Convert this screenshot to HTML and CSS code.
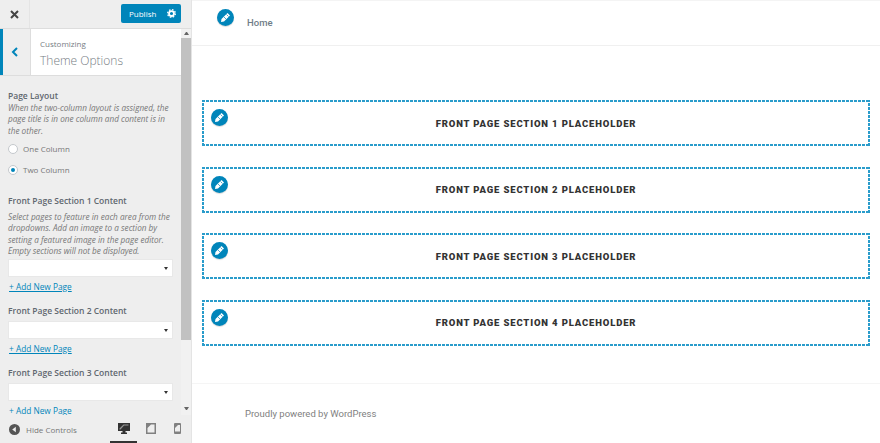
FILE: index.html
```html
<!DOCTYPE html>
<html lang="en">
<head>
  <meta charset="UTF-8">
  <title>Theme Options</title>
  <link rel="stylesheet" href="styles.css">
</head>
<body>
  <aside class="sidebar">
    <div class="topbar">
      <div class="close">
        <svg width="9" height="9" viewBox="0 0 9 9"><path d="M1 1l7 7M8 1L1 8" stroke="#444" stroke-width="2"/></svg>
      </div>
      <div class="publish">
        <span>Publish</span>
        <svg width="9" height="9" viewBox="0 0 20 20"><circle cx="10" cy="10" r="5.500" fill="none" stroke="#fff" stroke-width="4"/><circle cx="10" cy="10" r="8.500" fill="none" stroke="#fff" stroke-width="3" stroke-dasharray="3.500 3.170"/></svg>
      </div>
    </div>
    <div class="middle">
      <div class="scroller">
        <div class="section-head">
          <div class="back">
            <svg width="7" height="10" viewBox="0 0 7 10"><path d="M6 1L2 5l4 4" fill="none" stroke="#0085ba" stroke-width="2"/></svg>
          </div>
          <div class="head-text">
            <div class="crumb">Customizing</div>
            <div class="head-title">Theme Options</div>
          </div>
        </div>
        <div class="controls">
          <h4 class="label">Page Layout</h4>
          <p class="desc">When the two-column layout is assigned, the page title is in one column and content is in the other.</p>
          <div class="radio"><i class="dot"></i>One Column</div>
          <div class="radio"><i class="dot on"></i>Two Column</div>

          <h4 class="label first">Front Page Section 1 Content</h4>
          <p class="desc">Select pages to feature in each area from the dropdowns. Add an image to a section by setting a featured image in the page editor. Empty sections will not be displayed.</p>
          <div class="select"><b></b></div>
          <a class="add">+ Add New Page</a>

          <h4 class="label">Front Page Section 2 Content</h4>
          <div class="select"><b></b></div>
          <a class="add">+ Add New Page</a>

          <h4 class="label">Front Page Section 3 Content</h4>
          <div class="select"><b></b></div>
          <a class="add">+ Add New Page</a>
        </div>
      </div>
      <div class="scrollbar">
        <div class="arrow up"></div>
        <div class="thumb"></div>
        <div class="arrow down"></div>
      </div>
    </div>
    <div class="bottombar">
      <div class="hide">
        <svg width="11" height="11" viewBox="0 0 11 11"><circle cx="5.500" cy="5.500" r="5.500" fill="#555"/><path d="M6.800 2.800v5.400L3.200 5.500z" fill="#eee"/></svg>
        <span>Hide Controls</span>
      </div>
      <div class="devices">
        <div class="device active">
          <svg width="12" height="12" viewBox="0 0 12 12"><path fill="#333" d="M0 1h12v8H7.500v1.500H9V12H3v-1.500h1.500V9H0z"/><path fill="#999" d="M1.500 7.500v-1l4-4h5v1h-4.500l-3.500 4z"/></svg>
        </div>
        <div class="device">
          <svg width="10" height="11" viewBox="0 0 10 11"><path fill="#808080" d="M0 0h10v11H0z"/><path fill="#eee" d="M1.500 9.500V5L5 1.500h3.500v8z"/></svg>
        </div>
        <div class="device">
          <svg width="7" height="11" viewBox="0 0 7 11"><path fill="#808080" d="M0 1q0-1 1-1h5q1 0 1 1v9q0 1-1 1H1q-1 0-1-1z"/><path fill="#eee" d="M1 8.500V5l3-3h2v6.500z"/></svg>
        </div>
      </div>
    </div>
  </aside>

  <main class="preview">
    <header class="site-head">
      <span class="pencil"><svg width="11" height="11" viewBox="0 0 11 11"><path fill="#fff" d="M7.500 1l2.500 2.500-6 6L1 10l.5-3z"/><path stroke="#0085ba" stroke-width=".7" d="M6.500 2.500l2 2M4 5l2 2"/></svg></span>
      <span class="home">Home</span>
    </header>
    <div class="sections">
      <section class="block">
        <span class="pencil"><svg width="11" height="11" viewBox="0 0 11 11"><path fill="#fff" d="M7.500 1l2.500 2.500-6 6L1 10l.5-3z"/><path stroke="#0085ba" stroke-width=".7" d="M6.500 2.500l2 2M4 5l2 2"/></svg></span>
        <h2>Front Page Section 1 Placeholder</h2>
      </section>
      <section class="block">
        <span class="pencil"><svg width="11" height="11" viewBox="0 0 11 11"><path fill="#fff" d="M7.500 1l2.500 2.500-6 6L1 10l.5-3z"/><path stroke="#0085ba" stroke-width=".7" d="M6.500 2.500l2 2M4 5l2 2"/></svg></span>
        <h2>Front Page Section 2 Placeholder</h2>
      </section>
      <section class="block">
        <span class="pencil"><svg width="11" height="11" viewBox="0 0 11 11"><path fill="#fff" d="M7.500 1l2.500 2.500-6 6L1 10l.5-3z"/><path stroke="#0085ba" stroke-width=".7" d="M6.500 2.500l2 2M4 5l2 2"/></svg></span>
        <h2>Front Page Section 3 Placeholder</h2>
      </section>
      <section class="block">
        <span class="pencil"><svg width="11" height="11" viewBox="0 0 11 11"><path fill="#fff" d="M7.500 1l2.500 2.500-6 6L1 10l.5-3z"/><path stroke="#0085ba" stroke-width=".7" d="M6.500 2.500l2 2M4 5l2 2"/></svg></span>
        <h2>Front Page Section 4 Placeholder</h2>
      </section>
    </div>
    <footer class="site-foot">Proudly powered by WordPress</footer>
  </main>
</body>
</html>
```

FILE: styles.css
```css
* {
  box-sizing: border-box;
}
body {
  margin: 0;
  width: 880px;
  height: 443px;
  display: flex;
  overflow: hidden;
  background: #fff;
  font-family: "Open Sans", sans-serif;
}

/* customizer sidebar */
.sidebar {
  width: 192px;
  height: 443px;
  display: flex;
  flex-direction: column;
  background: #eee;
  border-right: 1px solid #e4e4e4;
}
.topbar {
  height: 29px;
  flex: none;
  display: flex;
  align-items: center;
  justify-content: space-between;
  padding-right: 10px;
  background: #eee;
  border-bottom: 1px solid #ddd;
}
.close {
  width: 30px;
  height: 28px;
  display: flex;
  align-items: center;
  justify-content: center;
  border-right: 1px solid #e4e4e4;
}
.publish {
  width: 60px;
  height: 19px;
  margin-top: -1px;
  display: flex;
  align-items: center;
  justify-content: space-between;
  padding: 0 5px 0 8px;
  border-radius: 2px;
  background: #0085ba;
  color: #fff;
  font-size: 8px;
}
.middle {
  flex: 1;
  min-height: 0;
  display: flex;
}
.scroller {
  flex: 1;
  min-width: 0;
  overflow: hidden;
}
.section-head {
  height: 47px;
  display: flex;
  background: #fff;
  border-bottom: 1px solid #ddd;
}
.back {
  width: 31px;
  display: flex;
  align-items: center;
  justify-content: center;
  padding-right: 4px;
  background: #eee;
  border-left: 3px solid #0085ba;
  border-right: 1px solid #ddd;
}
.head-text {
  padding: 8px 0 0 9px;
  color: #777d84;
}
.crumb {
  font-size: 8px;
  line-height: 13px;
}
.head-title {
  margin-top: 1px;
  font-size: 12px;
  line-height: 20px;
  font-weight: 300;
}
.controls {
  padding: 14px 8px 0;
}
.label {
  margin: 12.500px 0 0;
  font-size: 8.500px;
  line-height: 12px;
  font-weight: 600;
  color: #60676e;
}
.controls .label:first-child {
  margin-top: 0;
}
.controls .label.first {
  margin-top: 18.500px;
}
.desc {
  margin: 0;
  font-size: 8.200px;
  line-height: 11.400px;
  font-style: italic;
  color: #777;
}
.label.first + .desc {
  padding-top: 4px;
}
.radio {
  display: flex;
  align-items: center;
  gap: 5px;
  height: 13px;
  margin-top: 8px;
  font-size: 8px;
  color: #777;
}
.desc + .radio {
  margin-top: 6px;
}
.dot {
  width: 10px;
  height: 10px;
  border-radius: 50%;
  border: 1px solid #c4c8cc;
  background: #fff;
  display: flex;
  align-items: center;
  justify-content: center;
}
.dot.on::after {
  content: "";
  width: 4px;
  height: 4px;
  border-radius: 50%;
  background: #0085ba;
}
.select {
  height: 18px;
  margin: 4px 0 0;
  position: relative;
  background: #fff;
  border: 1px solid #e8e8e8;
}
.desc + .select {
  margin-top: 3px;
}
.select b {
  position: absolute;
  right: 4px;
  top: 7px;
  border: 2px solid transparent;
  border-top: 3px solid #333;
  border-bottom: 0;
}
.add {
  display: block;
  margin: 3.500px 0 0 1px;
  font-size: 8.300px;
  line-height: 12px;
  color: #0085ba;
  text-decoration: underline;
}
.scrollbar {
  width: 10px;
  flex: none;
  display: flex;
  flex-direction: column;
  align-items: center;
  background: #f1f1f1;
}
.arrow {
  height: 3px;
  flex: none;
  width: 5px;
  border-left: 2.500px solid transparent;
  border-right: 2.500px solid transparent;
}
.arrow.up {
  margin-top: 3px;
  border-bottom: 3px solid #666;
}
.arrow.down {
  margin-top: auto;
  margin-bottom: 5px;
  border-top: 3px solid #666;
}
.thumb {
  width: 100%;
  height: 302px;
  margin-top: 3px;
  background: #c1c1c1;
}
.bottombar {
  height: 28px;
  flex: none;
  display: flex;
  align-items: flex-start;
  justify-content: space-between;
  background: #eee;
}
.hide {
  display: flex;
  align-items: center;
  gap: 6px;
  height: 28px;
  padding-left: 9px;
  font-size: 8px;
  color: #777;
}
.devices {
  display: flex;
}
.device {
  width: 27px;
  height: 28px;
  display: flex;
  align-items: center;
  justify-content: center;
  border-bottom: 2px solid transparent;
}
.device.active {
  border-bottom-color: #333;
}

/* site preview */
.preview {
  flex: 1;
  min-width: 0;
  display: flex;
  flex-direction: column;
  font-family: Roboto, sans-serif;
}
.pencil {
  width: 17px;
  height: 17px;
  flex: none;
  display: flex;
  align-items: center;
  justify-content: center;
  border-radius: 50%;
  background: #0085ba;
  box-shadow: 0 1px 1px rgba(0, 0, 0, .15), 0 0 0 1px #fff;
}
.site-head {
  height: 46px;
  flex: none;
  display: flex;
  align-items: flex-start;
  gap: 13px;
  padding: 8px 0 0 25px;
  border-top: 1px solid #f4f4f4;
  border-bottom: 1px solid #f0f0f0;
}
.home {
  margin-top: 8px;
  font-size: 9.500px;
  font-weight: 500;
  color: #6f7d88;
}
.sections {
  flex: none;
  padding: 54px 10px 0 10px;
  display: flex;
  flex-direction: column;
  gap: 20.500px;
}
/* short dashes, border: dashed draws them too long */
.block {
  height: 46px;
  display: flex;
  align-items: center;
  justify-content: center;
  position: relative;
  background:
    repeating-linear-gradient(90deg, #2a9ccb 0 3px, transparent 3px 4px) top / 100% 2px no-repeat,
    repeating-linear-gradient(90deg, #2a9ccb 0 3px, transparent 3px 4px) bottom / 100% 2px no-repeat,
    repeating-linear-gradient(0deg, #2a9ccb 0 3px, transparent 3px 4px) left / 2px 100% no-repeat,
    repeating-linear-gradient(0deg, #2a9ccb 0 3px, transparent 3px 4px) right / 2px 100% no-repeat;
}
.block .pencil {
  position: absolute;
  left: 9px;
  top: 9px;
}
.block h2 {
  margin: 0;
  font-size: 9.500px;
  font-weight: 900;
  letter-spacing: .85px;
  text-transform: uppercase;
  color: #333;
}
.site-foot {
  margin-top: 37px;
  padding: 23px 0 0 53px;
  border-top: 1px solid #f5f5f5;
  font-size: 9.500px;
  line-height: 14px;
  color: #808080;
}
```
